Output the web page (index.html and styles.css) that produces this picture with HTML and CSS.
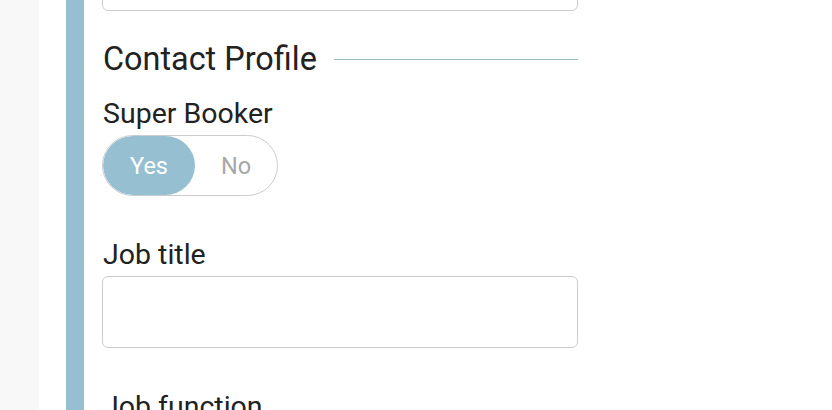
FILE: index.html
```html
<!DOCTYPE html>
<html>
<head>
<meta charset="utf-8">
<link rel="stylesheet" href="styles.css">
</head>
<body>
<div class="page">
  <div class="gutter"></div>
  <div class="panel">
    <div class="accent"></div>
    <div class="form">
      <div class="input prev"></div>
      <div class="section-head">
        <h2 class="section-title">Contact Profile</h2>
        <div class="rule"></div>
      </div>
      <div class="field">
        <label class="label">Super Booker</label>
        <div class="toggle">
          <span class="opt on">Yes</span>
          <span class="opt">No</span>
        </div>
      </div>
      <div class="field jobtitle">
        <label class="label">Job title</label>
        <div class="input tall"></div>
      </div>
      <div class="field jobfunc">
        <label class="label">Job function</label>
      </div>
    </div>
  </div>
</div>
</body>
</html>
```
FILE: styles.css
```css
* { box-sizing: border-box; }
html, body { margin: 0; padding: 0; background: #fff; }
body {
  font-family: Roboto, "Liberation Sans", sans-serif;
  color: #222;
  width: 832px;
  height: 410px;
  overflow: hidden;
}
.page { display: flex; height: 410px; }
.gutter { width: 39px; background: #f8f8f8; flex: none; }
.panel { display: flex; padding-left: 27px; flex: 1; }
.accent { width: 18px; background: #97bfd2; flex: none; }
.form { width: 494px; padding-left: 18px; }
.input {
  border: 1px solid #cccccc;
  border-radius: 6px;
  background: #fff;
}
.prev { height: 71px; margin-top: -60px; }
.section-head {
  display: flex;
  align-items: center;
  margin-top: 30px;
  height: 36px;
}
.section-title {
  margin: 0;
  font-weight: 400;
  font-size: 32.4px;
  line-height: 36px;
  padding-left: 1px;
}
.rule { flex: 1; height: 1px; background: #9ab9c6; margin-left: 17px; }
.field { display: flex; flex-direction: column; align-items: flex-start; }
.label { font-size: 28.5px; line-height: 34px; padding-left: 1px; }
.section-head + .field { margin-top: 20px; }
.toggle {
  display: flex;
  margin-top: 4px;
  width: 176px;
  height: 61px;
  border: 1px solid #cccccc;
  border-radius: 31px;
  overflow: hidden;
}
.opt {
  display: flex;
  align-items: center;
  justify-content: center;
  flex: 1;
  height: 100%;
  font-size: 23.5px;
  color: #a8a8a8;
  border-radius: 30px;
}
.opt.on { flex: 0 0 92px; background: #97bfd2; color: #fff; }
.jobtitle { margin-top: 42px; }
.jobtitle .label { margin-bottom: 4px; }
.tall { width: 476px; height: 72px; }
.jobfunc { margin-top: 42px; }
```
